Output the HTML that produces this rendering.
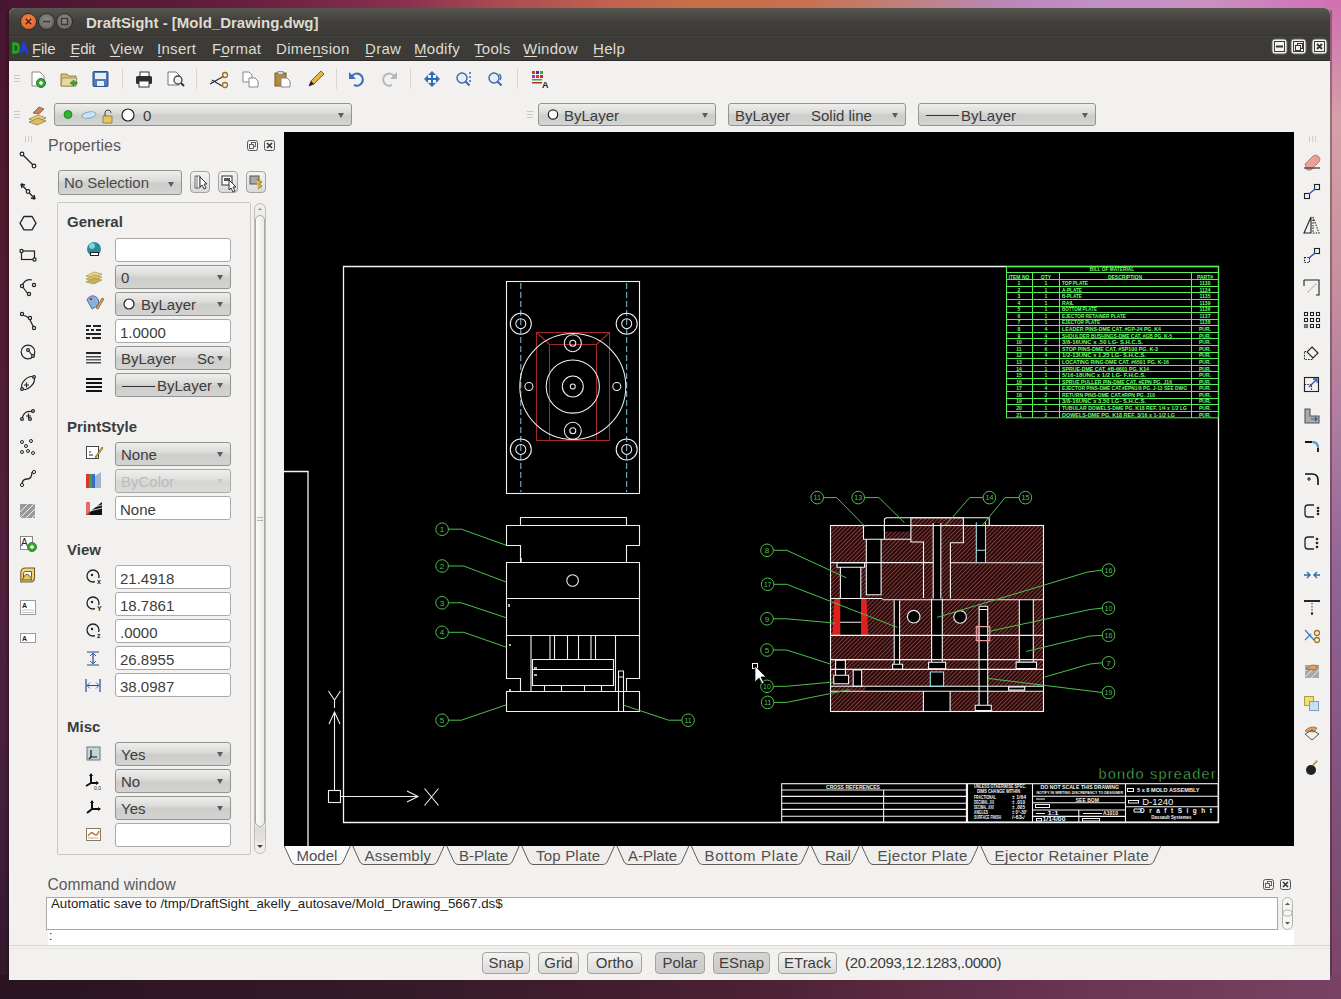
<!DOCTYPE html>
<html><head><meta charset="utf-8">
<style>
*{margin:0;padding:0;box-sizing:border-box}
html,body{width:1341px;height:999px;overflow:hidden}
body{position:relative;font-family:"Liberation Sans",sans-serif;font-size:14px;color:#3c3c3c;background:#3a1228}
.a{position:absolute}
#bg{left:0;top:0;width:1341px;height:999px;background:linear-gradient(90deg,#3c1229 0%,#4c1833 45%,#8a3a68 80%,#c864a0 100%)}
#bg2{left:0;top:0;width:1341px;height:999px;background:linear-gradient(180deg,rgba(0,0,0,0) 0%,rgba(0,0,0,0) 60%,rgba(20,10,20,0.35) 100%)}
#win{left:9px;top:8px;width:1321px;height:972px;background:#f2f1f0;border-radius:6px 6px 0 0}
#title{left:9px;top:8px;width:1321px;height:28px;background:linear-gradient(#57554f,#403f3a 50%,#3c3b37);border-radius:6px 6px 0 0}
#menu{left:9px;top:36px;width:1321px;height:25px;background:#3c3b37}
.ttl{color:#dfdbd2;font-weight:bold;font-size:15px;white-space:nowrap}
.mi{color:#dfdbd2;font-size:15px;white-space:nowrap;top:40px;letter-spacing:.3px}
.wb{width:17px;height:17px;border-radius:50%;top:13px}
.cb{border:1px solid #939392;border-radius:3px;background:linear-gradient(#eeeeed 0%,#dcdcdb 40%,#cdcdcc 55%,#d3d3d2 100%);white-space:nowrap;font-size:15px;color:#3c3c3c;overflow:hidden}
.cb .ar{position:absolute;right:7px;top:9px;width:0;height:0;border-left:3.5px solid transparent;border-right:3.5px solid transparent;border-top:5px solid #5c5c5c}
.tf{border:1px solid #aaa9a7;border-radius:3px;background:#fff;white-space:nowrap;font-size:15px;color:#3c3c3c;overflow:hidden}
.btn{border:1px solid #a4a3a1;border-radius:4px;background:linear-gradient(#f4f4f3,#dad9d7);font-size:15px;color:#3c3c3c;text-align:center;white-space:nowrap}
.btnp{background:linear-gradient(#d6d5d3,#cbcac8)}
.sec{font-weight:bold;font-size:15px;color:#3c3c3c}
.tab{font-size:15px;color:#505050;white-space:nowrap;top:847px}
</style></head><body>
<div class="a" style="left:0;top:0;width:1341px;height:999px;background:linear-gradient(180deg,#481530 0%,#4e1a2e 20%,#52203c 55%,#44203a 80%,#30182a 100%)"></div><div class="a" style="left:5px;top:8px;width:4px;height:972px;background:linear-gradient(90deg,rgba(20,10,15,0),rgba(20,10,15,.4))"></div>
<div class="a" style="left:0;top:0;width:1341px;height:10px;background:linear-gradient(90deg,#481530 0%,#5a1a38 12%,#6a2040 19%,#8a3050 30%,#a84a50 37%,#c06050 45%,#c87048 52%,#c87050 60%,#c08078 67%,#b888b8 75%,#c090c8 82%,#c890c0 90%,#d078b8 97%,#d070b0 100%)"></div>
<div class="a" style="left:1325px;top:0;width:16px;height:999px;background:linear-gradient(180deg,#d070b0 0%,#d8a0a8 12%,#c8909e 28%,#b07ca0 42%,#946494 57%,#84527c 78%,#7a4466 100%)"></div><div class="a" style="left:1330px;top:10px;width:2px;height:972px;background:rgba(40,20,30,.35)"></div>
<div class="a" style="left:0;top:975px;width:1341px;height:24px;background:linear-gradient(90deg,#2a1422 0%,#351a28 30%,#4a2032 55%,#6a3452 80%,#7a4262 100%)"></div>
<div class="a" id="win"></div>
<div class="a" id="title"></div>
<div class="a" id="menu"></div><div class="a" style="left:9px;top:34.5px;width:1321px;height:1px;background:#34332f"></div><div class="a" style="left:9px;top:36px;width:1321px;height:1px;background:#44433e"></div><div class="a" style="left:9px;top:60px;width:1321px;height:1px;background:#2e2d2a"></div>
<!-- window buttons -->
<div class="a wb" style="left:20px;background:radial-gradient(circle at 50% 40%,#f7834c,#e05a1e);border:1px solid #2c2b28"></div>
<div class="a wb" style="left:38px;background:radial-gradient(circle at 50% 40%,#8e8c86,#5f5d58);border:1px solid #2c2b28"></div>
<div class="a wb" style="left:56px;background:radial-gradient(circle at 50% 40%,#8e8c86,#5f5d58);border:1px solid #2c2b28"></div>
<div class="a ttl" style="left:86px;top:14px">DraftSight - [Mold_Drawing.dwg]</div>
<!-- menu -->
<svg class="a" style="left:9px;top:8px" width="1321" height="53" viewBox="9 8 1321 53">
 <path d="M25.8 18.8l5.4 5.4M31.2 18.8l-5.4 5.4" stroke="#4a2214" stroke-width="1.5"/>
 <path d="M43 21.5h7" stroke="#3a3a36" stroke-width="1.6"/>
 <rect x="61.5" y="18.5" width="6" height="6" fill="none" stroke="#3a3a36" stroke-width="1.3"/>
 <path d="M12 42h3q5 0 5 6t-5 6h-3z" fill="#2aa82a" stroke="#1a6a1a" stroke-width=".8"/><path d="M14.5 45h1q2 0 2 3t-2 3h-1z" fill="#1a5a1a"/>
 <path d="M19 54l4-12h2l4 12h-2.5l-1-3h-3l-1 3z" fill="#2a3ad8"/>
 <g fill="#dfdbd2"><rect x="32.4" y="56" width="7.2" height="1"/><rect x="70" y="56" width="8.8" height="1"/><rect x="109.9" y="56" width="10.3" height="1"/><rect x="158.3" y="56" width="3.2" height="1"/><rect x="220.3" y="56" width="8.1" height="1"/><rect x="313.3" y="56" width="9" height="1"/><rect x="365.4" y="56" width="7.9" height="1"/><rect x="415.3" y="56" width="11.9" height="1"/><rect x="475.4" y="56" width="8.5" height="1"/><rect x="524.1" y="56" width="13" height="1"/><rect x="593.8" y="56" width="9.6" height="1"/></g>
 <g fill="#f2f1f0" stroke="#6a6964" stroke-width="1"><rect x="1272" y="39" width="15" height="15" rx="3"/><rect x="1291" y="39" width="15" height="15" rx="3"/><rect x="1312" y="39" width="15" height="15" rx="3"/></g>
 <g fill="none" stroke="#3a3a36" stroke-width="1"><rect x="1274.5" y="41.5" width="10" height="10"/><rect x="1293.5" y="41.5" width="10" height="10"/><rect x="1314.5" y="41.5" width="10" height="10"/></g>
 <path d="M1276 46.5h7" stroke="#333" stroke-width="2"/>
 <rect x="1297.5" y="43.5" width="5" height="5" fill="none" stroke="#333"/><rect x="1295.5" y="45.5" width="5" height="5" fill="#f2f1f0" stroke="#333"/>
 <path d="M1317 44l5 5M1322 44l-5 5" stroke="#333" stroke-width="1.8"/>
</svg>
<div class="a mi" style="left:32px;letter-spacing:-.2px">File</div>
<div class="a mi" style="left:70.5px;letter-spacing:-.3px">Edit</div>
<div class="a mi" style="left:110px">View</div>
<div class="a mi" style="left:157px">Insert</div>
<div class="a mi" style="left:212px">Format</div>
<div class="a mi" style="left:276px">Dimension</div>
<div class="a mi" style="left:365px">Draw</div>
<div class="a mi" style="left:414px">Modify</div>
<div class="a mi" style="left:474px">Tools</div>
<div class="a mi" style="left:523px">Window</div>
<div class="a mi" style="left:593px">Help</div>

<!-- toolbar 1 -->
<svg class="a" style="left:9px;top:61px" width="1321" height="72" viewBox="9 61 1321 72">
 <g fill="#c9c8c5"><rect x="14" y="75" width="6" height="1"/><rect x="14" y="78" width="6" height="1"/><rect x="14" y="81" width="6" height="1"/>
 <rect x="14" y="111" width="6" height="1"/><rect x="14" y="114" width="6" height="1"/><rect x="14" y="117" width="6" height="1"/>
 <rect x="527" y="111" width="6" height="1"/><rect x="527" y="114" width="6" height="1"/><rect x="527" y="117" width="6" height="1"/></g>
 <g fill="#d6d5d2"><rect x="122" y="69" width="1" height="20"/><rect x="196" y="69" width="1" height="20"/><rect x="336" y="69" width="1" height="20"/><rect x="410" y="69" width="1" height="20"/><rect x="517" y="69" width="1" height="20"/></g>
 <!-- new -->
 <path d="M32 72h8l4 4v10h-12z" fill="#fff" stroke="#8a8a8a" stroke-width="1"/>
 <circle cx="41" cy="83" r="4.5" fill="#3aa53a" stroke="#1e7a1e"/><path d="M39 83h4M41 81v4" stroke="#fff" stroke-width="1.5"/>
 <!-- open -->
 <path d="M61 74h6l2 2h7v10h-15z" fill="#d8c07a" stroke="#9a8446"/><path d="M62 78h15l-2 8h-14z" fill="#e8d9a0" stroke="#9a8446" stroke-width=".8"/>
 <path d="M70 83l4-3v2h3v2h-3v2z" fill="#3aa53a" stroke="#1e7a1e" stroke-width=".6"/>
 <!-- save -->
 <rect x="93" y="71.5" width="15" height="15" rx="1" fill="#4f7ab8" stroke="#2b4f86"/><rect x="95" y="73" width="11" height="6" fill="#e8eef6"/><rect x="97" y="81" width="7" height="5" fill="#e8eef6"/>
 <!-- print -->
 <rect x="140" y="72" width="9" height="5" fill="#fff" stroke="#333"/><rect x="136" y="76" width="16" height="8" rx="1.5" fill="#2e2e2e"/><rect x="139" y="81" width="10" height="6" fill="#fff" stroke="#333"/>
 <!-- preview -->
 <path d="M168 72h8l3 3v10h-11z" fill="#fff" stroke="#777"/><circle cx="178" cy="80" r="4" fill="#f3f3f3" stroke="#444" stroke-width="1.3"/><path d="M181 83l3 3" stroke="#333" stroke-width="2"/>
 <!-- cut -->
 <path d="M210 84l14-8M212 80l10 6" stroke="#333" stroke-width="1.3"/><circle cx="225" cy="75" r="2.5" fill="none" stroke="#a07020" stroke-width="1.3"/><circle cx="225" cy="85" r="2.5" fill="none" stroke="#a07020" stroke-width="1.3"/>
 <path d="M211 82h4" stroke="#555" stroke-dasharray="1 1"/>
 <!-- copy -->
 <path d="M243 72h6l3 3v7h-9z" fill="#fff" stroke="#888"/><path d="M249 78h6l3 3v6h-9z" fill="#fff" stroke="#888"/>
 <!-- paste -->
 <rect x="275" y="73" width="11" height="13" fill="#b88a3c" stroke="#7a5a20"/><rect x="278" y="71.5" width="5" height="3" fill="#ddd" stroke="#666" stroke-width=".6"/><path d="M281 78h6l3 3v6h-9z" fill="#fff" stroke="#888"/>
 <!-- pencil -->
 <path d="M309 86l2-5 10-10 3 3-10 10z" fill="#e2b64a" stroke="#5a4a2a" stroke-width=".8"/><path d="M309 86l2-5 3 3z" fill="#222"/>
 <!-- undo -->
 <path d="M352 76a6 6 0 1 1 2 9" fill="none" stroke="#3b6fb6" stroke-width="2.2"/><path d="M349 72v7h7z" fill="#3b6fb6"/>
 <!-- redo -->
 <path d="M394 76a6 6 0 1 0 -2 9" fill="none" stroke="#b8b8b8" stroke-width="2.2"/><path d="M397 72v7h-7z" fill="#b8b8b8"/>
 <!-- pan -->
 <path d="M432 71l4 4h-3v3h3v-3l4 4-4 4v-3h-3v3h3l-4 4-4-4h3v-3h-3v3l-4-4 4-4v3h3v-3h-3z" fill="#2f6db5"/>
 <!-- zoom -->
 <circle cx="462" cy="78" r="5" fill="#e6eef8" stroke="#3a6aa8" stroke-width="1.4"/><path d="M465.5 81.5l4 4" stroke="#3a6aa8" stroke-width="2"/><circle cx="470" cy="73" r="1" fill="#3a6aa8"/><circle cx="470" cy="77" r="1" fill="#3a6aa8"/><circle cx="470" cy="81" r="1" fill="#3a6aa8"/>
 <!-- zoom prev -->
 <circle cx="494" cy="78" r="5" fill="#e6eef8" stroke="#3a6aa8" stroke-width="1.4"/><path d="M497.5 81.5l4 4" stroke="#3a6aa8" stroke-width="2"/><path d="M499 74a4 4 0 0 1 1 6" fill="none" stroke="#3a6aa8" stroke-width="1.3"/>
 <!-- layer manager -->
 <rect x="532" y="71" width="3" height="3" fill="#d33"/><rect x="536" y="71" width="3" height="3" fill="#33a"/><rect x="540" y="71" width="3" height="3" fill="#3a3"/>
 <rect x="532" y="75" width="3" height="3" fill="#a3a"/><rect x="536" y="75" width="3" height="3" fill="#d33"/><rect x="540" y="75" width="3" height="3" fill="#a33"/>
 <rect x="532" y="79" width="10" height="1.5" fill="#3a3"/><rect x="532" y="82" width="10" height="1.5" fill="#a33"/><text x="542" y="88" font-size="9" font-weight="bold" fill="#222" font-family="Liberation Sans">A</text>
 <!-- layer icon row2 -->
 <path d="M29 119l9-4 8 3-9 4z" fill="#e8d28a" stroke="#8a7432" stroke-width=".7"/><path d="M29 122l9-4 8 3-9 4z" fill="#d8bc66" stroke="#8a7432" stroke-width=".7"/><path d="M33 113l6-6 5 2-5 5z" fill="#c8845a" stroke="#7a4a2a" stroke-width=".7"/>
</svg>
<div class="a cb" style="left:54px;top:103px;width:298px;height:23px">
 <svg class="a" style="left:0;top:0" width="120" height="22"><circle cx="13" cy="10.5" r="4" fill="#2fb52f" stroke="#1a7a1a" stroke-width=".8"/><ellipse cx="34" cy="11" rx="7" ry="3" fill="#cfe2f2" stroke="#7aa6cc" transform="rotate(-12 34 11)"/><path d="M48 12h9v7h-9z" fill="#e4c85a" stroke="#8a7432" stroke-width=".8"/><path d="M50 12v-3a3 3 0 0 1 6 0" fill="none" stroke="#444" stroke-width="1"/><circle cx="73" cy="11" r="6" fill="#fff" stroke="#222" stroke-width="1.2"/></svg>
 <div class="a" style="left:88px;top:3px">0</div><div class="ar"></div></div>
<div class="a cb" style="left:538px;top:103px;width:178px;height:23px"><svg class="a" style="left:0;top:0" width="30" height="22"><circle cx="14" cy="10.5" r="4.7" fill="#fff" stroke="#222" stroke-width="1.2"/></svg><div class="a" style="left:25px;top:3px">ByLayer</div><div class="ar"></div></div>
<div class="a cb" style="left:728px;top:103px;width:178px;height:23px"><div class="a" style="left:6px;top:3px">ByLayer</div><div class="a" style="left:82px;top:3px">Solid line</div><div class="ar"></div></div>
<div class="a cb" style="left:918px;top:103px;width:178px;height:23px"><div class="a" style="left:7px;top:11px;width:33px;height:1px;background:#333"></div><div class="a" style="left:42px;top:3px">ByLayer</div><div class="ar"></div></div>


<!-- left toolbar -->
<svg class="a" style="left:9px;top:132px" width="36" height="520" viewBox="9 132 36 520">
 <g fill="#d0cfcc"><rect x="25" y="136" width="1" height="6"/><rect x="28" y="136" width="1" height="6"/><rect x="31" y="136" width="1" height="6"/></g>
 <g fill="none" stroke="#222" stroke-width="1.2">
  <path d="M22 154L34 166"/><circle cx="22" cy="154" r="1.8" fill="#f2f1f0"/><circle cx="34" cy="166" r="1.8" fill="#f2f1f0"/>
  <path d="M21 184L35 199"/><circle cx="28" cy="191.5" r="1.8" fill="#f2f1f0"/><path d="M21 184l4 1M21 184l1 4M35 199l-4-1M35 199l-1-4" stroke-width="1.4"/>
  <path d="M24 216.5h8l4 6.7-4 6.7h-8l-4-6.7z" stroke-width="1.3"/>
  <rect x="21.5" y="251" width="13" height="8.5"/><circle cx="21.5" cy="251" r="1.6" fill="#f2f1f0"/><circle cx="34.5" cy="259.5" r="1.6" fill="#f2f1f0"/>
  <path d="M22 286q3-8 10-6M22 286l6 8" /><circle cx="22" cy="286" r="1.6" fill="#f2f1f0"/><circle cx="29" cy="294" r="1.6" fill="#f2f1f0"/><circle cx="34" cy="285" r="1.6" fill="#f2f1f0"/>
  <path d="M22 315q6 1 8 5t4 8"/><circle cx="22" cy="314" r="1.6" fill="#f2f1f0"/><circle cx="30" cy="318" r="1.6" fill="#f2f1f0"/><circle cx="34" cy="328" r="1.6" fill="#f2f1f0"/>
  <circle cx="28" cy="352" r="6.8"/><path d="M28 350l4 5"/><circle cx="28" cy="350" r="1.4" fill="#f2f1f0"/><circle cx="33" cy="356" r="1.4" fill="#f2f1f0"/>
  <ellipse cx="28" cy="383" rx="8" ry="4.5" transform="rotate(-45 28 383)"/><circle cx="22" cy="389" r="1.4" fill="#f2f1f0"/><circle cx="34" cy="377" r="1.4" fill="#f2f1f0"/><path d="M24 385h5M26.5 382.5v5"/>
  <path d="M22 419q2-10 12-7"/><circle cx="22" cy="419" r="1.4" fill="#f2f1f0"/><circle cx="30" cy="419" r="1.4" fill="#f2f1f0"/><circle cx="33" cy="411" r="1.4" fill="#f2f1f0"/><path d="M26 416h5M28.5 413.5v5"/>
 </g>
 <g fill="none" stroke="#222" stroke-width="1"><circle cx="22" cy="442" r="1.5"/><circle cx="31" cy="441" r="1.5"/><circle cx="26" cy="446" r="1.5"/><circle cx="22" cy="452" r="1.5"/><circle cx="28" cy="451" r="1.5"/><circle cx="33" cy="453" r="1.5"/></g>
 <path d="M22 485q0-6 5-6t5-7" fill="none" stroke="#222" stroke-width="1.3"/><circle cx="22" cy="485" r="1.6" fill="#f2f1f0" stroke="#222"/><circle cx="34" cy="472" r="1.6" fill="#f2f1f0" stroke="#222"/>
 <rect x="20" y="504" width="15" height="14" fill="#9a9a9a"/><path d="M20 512l8-8M20 518l14-14M26 518l9-9M32 518l3-3" stroke="#eee" stroke-width="1"/>
 <rect x="20.5" y="536.5" width="12" height="13" fill="#fff" stroke="#888"/><text x="21" y="546" font-size="10" fill="#222" font-family="Liberation Sans">A</text><circle cx="32" cy="547" r="4.5" fill="#36a836" stroke="#1a6a1a" stroke-width=".8"/><path d="M30 547h4M32 545v4" stroke="#fff" stroke-width="1.3"/>
 <path d="M20.8 573q0-5 5-5h8.7v9.5q0 4.5-4 4.5h-9.7z" fill="#f0d878" stroke="#6a5a2a" stroke-width="1.1"/><path d="M23.5 580v-6.5q0-2 2-2h6v6" fill="#fff" stroke="#6a5a2a" stroke-width="1"/><path d="M22 580q3-6 5-6t5 6z" fill="#e8c858" stroke="#5a4a1a" stroke-width=".9"/>
 <rect x="20.5" y="600.5" width="15" height="14" fill="#fff" stroke="#999"/><text x="22" y="608" font-size="7" font-weight="bold" fill="#222" font-family="Liberation Sans">A</text><path d="M22 610h12M22 612.5h12" stroke="#aaa" stroke-width=".7"/>
 <rect x="20.5" y="633.5" width="15" height="9" fill="#fff" stroke="#999"/><text x="22" y="641" font-size="7" font-weight="bold" fill="#222" font-family="Liberation Sans">A</text>
</svg>
<!-- properties -->
<div class="a" style="left:48px;top:136.5px;font-size:16px;color:#5a5a5a">Properties</div>
<svg class="a" style="left:245px;top:138px" width="32" height="16"><rect x="2.5" y="2.5" width="10" height="10" rx="2" fill="none" stroke="#555"/><rect x="6.5" y="4.5" width="4" height="4" fill="none" stroke="#555" stroke-width=".9"/><rect x="4.5" y="6.5" width="4" height="4" fill="#f2f1f0" stroke="#555" stroke-width=".9"/><rect x="19.5" y="2.5" width="10" height="10" rx="2" fill="none" stroke="#555"/><path d="M22 5l5 5M27 5l-5 5" stroke="#333" stroke-width="1.6"/></svg>
<div class="a cb" style="left:58px;top:170px;width:124px;height:25px"><div class="a" style="left:5px;top:3px;color:#4a4a4a">No Selection</div><div class="ar" style="top:11px"></div></div>
<div class="a btn" style="left:190px;top:171px;width:20px;height:22px"></div>
<div class="a btn" style="left:218px;top:171px;width:20px;height:22px"></div>
<div class="a btn" style="left:246px;top:171px;width:20px;height:22px"></div>
<svg class="a" style="left:190px;top:171px" width="80" height="22">
 <path d="M5 5h5v12h-5zM7 5v12" fill="#fff" stroke="#444" stroke-width=".8"/><path d="M10 6l7 7h-3l2 4-2 1-2-4-2 2z" fill="#fff" stroke="#222" stroke-width=".9"/>
 <rect x="32" y="5" width="10" height="9" fill="#fff" stroke="#333"/><rect x="34" y="7" width="6" height="3" fill="#555"/><path d="M39 9l7 7h-3l2 4-2 1-2-4-2 2z" fill="#fff" stroke="#222" stroke-width=".9"/>
 <rect x="60" y="5" width="9" height="8" fill="#aaa" stroke="#555"/><path d="M66 8l6 3-3 2 3 2-4 3" fill="#e2b83a" stroke="#8a6a1a" stroke-width=".8"/>
</svg>
<div class="a" style="left:57px;top:202px;width:194px;height:653px;border:1px solid #c9c8c5;border-radius:2px"></div>
<div class="a" style="left:254px;top:203px;width:12px;height:651px;border:1px solid #bebdba;border-radius:6px;background:#efeeed"></div>
<div class="a" style="left:255px;top:827px;width:10px;height:16px;background:linear-gradient(#dcdbd9,#e4e3e1);border-radius:0 0 5px 5px"></div><div class="a" style="left:255px;top:215px;width:10px;height:612px;border:1px solid #a9a8a5;border-radius:5px;background:linear-gradient(90deg,#fbfbfb,#ebeae8)"></div><div class="a" style="left:257px;top:845px;width:0;height:0;border-left:3px solid transparent;border-right:3px solid transparent;border-top:3px solid #444"></div><div class="a" style="left:257.5px;top:208px;width:0;height:0;border-left:2.5px solid transparent;border-right:2.5px solid transparent;border-bottom:2px solid #888"></div>
<div class="a" style="left:257px;top:517px;width:6px;height:1px;background:#b5b4b1"></div><div class="a" style="left:257px;top:520px;width:6px;height:1px;background:#b5b4b1"></div>
<div class="a sec" style="left:67px;top:213px">General</div>
<div class="a sec" style="left:67px;top:418px">PrintStyle</div>
<div class="a sec" style="left:67px;top:541px">View</div>
<div class="a sec" style="left:67px;top:718px">Misc</div>
<div class="a tf" style="left:115px;top:238px;width:116px;height:24px"></div>
<div class="a cb" style="left:115px;top:265px;width:116px;height:24px"><div class="a" style="left:5px;top:3px">0</div><div class="ar"></div></div>
<div class="a cb" style="left:115px;top:292px;width:116px;height:24px"><svg class="a" style="left:0;top:0" width="24" height="22"><circle cx="13" cy="11" r="5" fill="#fff" stroke="#222" stroke-width="1.2"/></svg><div class="a" style="left:25px;top:3px">ByLayer</div><div class="ar"></div></div>
<div class="a tf" style="left:115px;top:319px;width:116px;height:24px"><div class="a" style="left:4px;top:4px">1.0000</div></div>
<div class="a cb" style="left:115px;top:346px;width:116px;height:24px"><div class="a" style="left:5px;top:3px">ByLayer</div><div class="a" style="left:81px;top:3px">Sc</div><div class="ar"></div></div>
<div class="a cb" style="left:115px;top:373px;width:116px;height:24px"><div class="a" style="left:6px;top:12px;width:33px;height:1px;background:#333"></div><div class="a" style="left:41px;top:3px">ByLayer</div><div class="ar"></div></div>
<div class="a cb" style="left:115px;top:442px;width:116px;height:24px"><div class="a" style="left:5px;top:3px">None</div><div class="ar"></div></div>
<div class="a cb" style="left:115px;top:469px;width:116px;height:24px;opacity:.75;color:#aaa"><div class="a" style="left:5px;top:3px;color:#aaa">ByColor</div><div class="ar" style="border-top-color:#bbb"></div></div>
<div class="a tf" style="left:115px;top:496px;width:116px;height:24px"><div class="a" style="left:4px;top:4px">None</div></div>
<div class="a tf" style="left:115px;top:565px;width:116px;height:24px"><div class="a" style="left:4px;top:4px">21.4918</div></div>
<div class="a tf" style="left:115px;top:592px;width:116px;height:24px"><div class="a" style="left:4px;top:4px">18.7861</div></div>
<div class="a tf" style="left:115px;top:619px;width:116px;height:24px"><div class="a" style="left:4px;top:4px">.0000</div></div>
<div class="a tf" style="left:115px;top:646px;width:116px;height:24px"><div class="a" style="left:4px;top:4px">26.8955</div></div>
<div class="a tf" style="left:115px;top:673px;width:116px;height:24px"><div class="a" style="left:4px;top:4px">38.0987</div></div>
<div class="a cb" style="left:115px;top:742px;width:116px;height:24px"><div class="a" style="left:5px;top:3px">Yes</div><div class="ar"></div></div>
<div class="a cb" style="left:115px;top:769px;width:116px;height:24px"><div class="a" style="left:5px;top:3px">No</div><div class="ar"></div></div>
<div class="a cb" style="left:115px;top:796px;width:116px;height:24px"><div class="a" style="left:5px;top:3px">Yes</div><div class="ar"></div></div>
<div class="a tf" style="left:115px;top:823px;width:116px;height:24px"></div>
<svg class="a" style="left:82px;top:236px" width="26" height="616" viewBox="82 236 26 616">
 <circle cx="94" cy="249" r="7" fill="#2a8a9a"/><circle cx="92" cy="246" r="3" fill="#7fd0d8"/><rect x="90" y="252" width="9" height="4" fill="#222"/><rect x="91" y="253" width="7" height="2" fill="#fff"/>
 <path d="M86 276l8-4 8 2-8 4z" fill="#e8d890" stroke="#9a8a3a" stroke-width=".6"/><path d="M86 279l8-4 8 2-8 4z" fill="#d8c470" stroke="#9a8a3a" stroke-width=".6"/><path d="M86 282l8-4 8 2-8 4z" fill="#c8b050" stroke="#9a8a3a" stroke-width=".6"/>
 <path d="M87 300a6 6 0 1 1 10 6l-5 3z" fill="#8ab0e0" stroke="#3a5a9a" stroke-width=".8"/><path d="M96 308l6-10 2 1-6 10z" fill="#e0a040" stroke="#6a4a1a" stroke-width=".6"/><circle cx="91" cy="299" r="1.3" fill="#c33"/>
 <g fill="#222"><rect x="86" y="325" width="5" height="2"/><rect x="93" y="325" width="8" height="2"/><rect x="86" y="329" width="3" height="2"/><rect x="91" y="329" width="3" height="2"/><rect x="96" y="329" width="5" height="2"/><rect x="86" y="333" width="15" height="2"/><rect x="86" y="337" width="4" height="2"/><rect x="92" y="337" width="9" height="2"/></g>
 <g fill="#222"><rect x="86" y="352" width="15" height="2"/><rect x="86" y="356" width="15" height="1.5" opacity=".8"/><rect x="86" y="359" width="15" height="1.5" opacity=".7"/><rect x="86" y="362" width="15" height="1.5" opacity=".8"/></g>
 <g fill="#111"><rect x="86" y="378" width="16" height="2"/><rect x="86" y="382" width="16" height="2"/><rect x="86" y="386" width="16" height="2"/><rect x="86" y="390" width="16" height="2"/></g>
 <rect x="86.5" y="446.5" width="12" height="12" fill="#fff" stroke="#444"/><path d="M89 452h2M89 455h4" stroke="#222"/><path d="M95 457l7-10 1 1-7 10z" fill="#e0b040" stroke="#5a4a1a" stroke-width=".6"/>
 <rect x="86" y="474" width="3" height="14" fill="#d33"/><rect x="89" y="474" width="3" height="14" fill="#3a3"/><rect x="92" y="474" width="3" height="14" fill="#3a6ad0"/><path d="M95 476l6-4v16h-6z" fill="#8ac" opacity=".8"/>
 <path d="M86 515l16-13v13z" fill="#111"/><rect x="86" y="502" width="4" height="13" fill="#d33" opacity=".7"/><path d="M90 508l12-3M90 511l12-3" stroke="#fff" stroke-width=".8"/>
 <g fill="none" stroke="#222" stroke-width="1.3"><circle cx="93" cy="576" r="6"/><circle cx="93" cy="603" r="6"/><circle cx="93" cy="630" r="6"/></g>
 <g fill="#f2f1f0"><rect x="95" y="578" width="8" height="7"/><rect x="95" y="605" width="8" height="7"/><rect x="95" y="632" width="8" height="7"/></g>
 <g fill="#222" font-size="7" font-weight="bold" font-family="Liberation Sans"><text x="97" y="584">x</text><text x="97" y="611">Y</text><text x="97" y="638">z</text></g>
 <circle cx="92" cy="575" r="1.2" fill="#222"/><circle cx="92" cy="602" r="1.2" fill="#222"/><circle cx="92" cy="629" r="1.2" fill="#222"/>
 <path d="M87 652h12M87 665h12M93 653v11" stroke="#2a4a8a" stroke-width="1.2"/><path d="M90 656l3-3 3 3M90 661l3 3 3-3" fill="none" stroke="#2a6ad0" stroke-width="1"/>
 <path d="M86 679v13M100 679v13M87 685.5h12" stroke="#2a4a8a" stroke-width="1.2"/><path d="M90 682.5l-3 3 3 3M96 682.5l3 3-3 3" fill="none" stroke="#2a6ad0" stroke-width="1"/>
 <rect x="87" y="747" width="13" height="13" fill="#c4d4d8" stroke="#6a7a7a"/><path d="M91 750v7h6M91 757l-2 2" stroke="#111" stroke-width="1.2" fill="none"/>
 <path d="M91 774v9l-5 3M91 783h7" stroke="#111" stroke-width="2" fill="none"/><path d="M89 776l2-3 2 3M96 781l3 2-3 2" fill="#111"/><text x="94" y="790" font-size="5" fill="#222" font-family="Liberation Sans">0,0</text>
 <path d="M92 801v8l-5 4M92 809h8" stroke="#111" stroke-width="2" fill="none"/><path d="M90 803l2-3 2 3M98 807l3 2-3 2" fill="#111"/>
 <rect x="86.5" y="828.5" width="14" height="12" fill="#fff" stroke="#8a7a5a"/><path d="M88 836q3-5 6-2t5-3" stroke="#c07a3a" stroke-width="1.5" fill="none"/><path d="M88 838h10" stroke="#aaa"/>
</svg>


<!-- right toolbar -->
<svg class="a" style="left:1294px;top:132px" width="36" height="660" viewBox="1294 132 36 660">
 <g fill="#d0cfcc"><rect x="1309" y="136" width="1" height="6"/><rect x="1312" y="136" width="1" height="6"/><rect x="1315" y="136" width="1" height="6"/></g>
 <path d="M1305 164l8-8q3-2 5 0l1 1q2 2 0 5l-8 8h-4z" fill="#e8a098" stroke="#b86a62" stroke-width=".8"/><path d="M1304 168h16" stroke="#333" stroke-width="1.2"/>
 <g fill="none" stroke="#222" stroke-width="1.1">
  <rect x="1304.5" y="193.5" width="5" height="5"/><rect x="1314.5" y="184.5" width="5" height="5"/><path d="M1309 194l6-5" stroke="#2a5ab0" stroke-width="1.5"/>
  <path d="M1311 217v16h-7z" /><path d="M1313 217l6 16h-6z" stroke-dasharray="1.5 1.2"/>
  <rect x="1304.5" y="257.5" width="5" height="5" stroke-dasharray="1.5 1.2"/><rect x="1314.5" y="248.5" width="5" height="5"/><path d="M1309 258l6-5" stroke="#2a5ab0" stroke-width="1.5"/>
  <path d="M1304 280h15v15h-3M1304 280v6" /><path d="M1308 292l8-8" stroke="#999" stroke-dasharray="1.5 1"/>
 </g>
 <g fill="#fff" stroke="#222" stroke-width="1.1"><rect x="1304.5" y="312.5" width="3" height="3"/><rect x="1310.5" y="312.5" width="3" height="3"/><rect x="1316.5" y="312.5" width="3" height="3"/><rect x="1304.5" y="318.5" width="3" height="3"/><rect x="1310.5" y="318.5" width="3" height="3"/><rect x="1316.5" y="318.5" width="3" height="3"/><rect x="1304.5" y="324.5" width="3" height="3" fill="#888" stroke="#666"/><rect x="1310.5" y="324.5" width="3" height="3"/><rect x="1316.5" y="324.5" width="3" height="3"/></g>
 <g fill="none" stroke="#222" stroke-width="1.1">
  <rect x="1304.5" y="351.5" width="8" height="8" stroke-dasharray="1.5 1.2"/><path d="M1312 347l6 6-5 5-6-6z" fill="#f2f1f0"/>
  <rect x="1304.5" y="377.5" width="14" height="14"/><rect x="1304.5" y="384.5" width="7" height="7" stroke-dasharray="1.5 1.2"/><path d="M1309 387l8-8M1313 379h4v4" stroke="#2a5ab0" stroke-width="1.3"/>
  <path d="M1305 409h5v7h9v7h-14z" fill="#aaa" stroke="#555"/><path d="M1311 419h6M1315 417l2 2-2 2" stroke="#2a5ab0"/>
  <path d="M1305 442h7q6 0 6 6v4" stroke="#111" stroke-width="1.8"/><path d="M1312 442q6 0 6 6" stroke="#5ab0e0" stroke-width="1.8"/>
  <path d="M1305 474h7q6 0 6 6v5" stroke="#111" stroke-width="1.6"/><path d="M1307 479h4M1309 477v4"/>
  <path d="M1314 505h-6q-3 0-3 3v6q0 3 3 3h6" stroke-width="1.3"/><circle cx="1318" cy="508" r=".8" fill="#222"/><circle cx="1318" cy="511" r=".8" fill="#222"/><circle cx="1318" cy="514" r=".8" fill="#222"/>
  <path d="M1314 537h-6q-3 0-3 3v6q0 3 3 3h6" stroke-width="1.3"/><circle cx="1317" cy="539" r=".8" fill="#222"/><circle cx="1317" cy="543" r=".8" fill="#222"/><circle cx="1317" cy="547" r=".8" fill="#222"/>
 </g>
 <path d="M1304 575h6M1314 575h6M1307 572l3 3-3 3M1317 572l-3 3 3 3" fill="none" stroke="#2a6ab0" stroke-width="1.3"/>
 <path d="M1304 601h16" stroke="#111" stroke-width="1.8"/><path d="M1312 603v9" stroke="#555" stroke-width="1.2" stroke-dasharray="1.5 1.5"/><path d="M1312 612v3" stroke="#111" stroke-width="1.6"/>
 <path d="M1305 630l9 10M1305 640l6-6" stroke="#3a7ac0" stroke-width="1.2"/><circle cx="1317" cy="633" r="2.5" fill="none" stroke="#a07a20" stroke-width="1.3"/><circle cx="1317" cy="640" r="2.5" fill="none" stroke="#a07a20" stroke-width="1.3"/>
 <rect x="1305" y="665" width="14" height="13" fill="#aaa"/><path d="M1305 671l6-6M1305 677l12-12M1311 678l8-8" stroke="#eee" stroke-width=".8"/><path d="M1306 669q5-6 12-3l-3 4z" fill="#e0a060" stroke="#8a5a2a" stroke-width=".7"/>
 <rect x="1304.5" y="696.5" width="9" height="9" fill="#f0e070" stroke="#b0a040"/><rect x="1309.5" y="701.5" width="9" height="9" fill="#c8e0f0" stroke="#6a9ac0" opacity=".9"/>
 <path d="M1305 731q5-6 12-3l-3 4z" fill="#e0a060" stroke="#8a5a2a" stroke-width=".7"/><path d="M1305 734l7 6 7-6-7-4z" fill="none" stroke="#555"/>
 <circle cx="1311" cy="770" r="5" fill="#222"/><path d="M1313 765l3-3" stroke="#a07020" stroke-width="1.2"/><circle cx="1316.5" cy="761.5" r="1.2" fill="#e0a030"/>
</svg>
<!-- tabs -->
<svg class="a" style="left:284px;top:846px" width="900" height="22" viewBox="284 846 900 22">
 <g stroke="#5e5d5a" stroke-width="1">
  <path d="M284 845.5L291.5 862Q293 864.5 295.5 864.5H339.0Q341.5 864.5 343.0 862L350.5 845.5" fill="#fbfbfb"/>
  <path d="M352.5 845.5L360.0 862Q361.5 864.5 364.0 864.5H432.9Q435.4 864.5 436.9 862L444.4 845.5" fill="#efeeed"/>
  <path d="M446.5 845.5L454.0 862Q455.5 864.5 458.0 864.5H508.0Q510.5 864.5 512.0 862L519.5 845.5" fill="#efeeed"/>
  <path d="M521.5 845.5L529.0 862Q530.5 864.5 533.0 864.5H603.2Q605.7 864.5 607.2 862L614.7 845.5" fill="#efeeed"/>
  <path d="M616.7 845.5L624.2 862Q625.7 864.5 628.2 864.5H677.6Q680.1 864.5 681.6 862L689.1 845.5" fill="#efeeed"/>
  <path d="M691.1 845.5L698.6 862Q700.1 864.5 702.6 864.5H797.7Q800.2 864.5 801.7 862L809.2 845.5" fill="#efeeed"/>
  <path d="M811.2 845.5L818.7 862Q820.2 864.5 822.7 864.5H848.0Q850.5 864.5 852.0 862L859.5 845.5" fill="#efeeed"/>
  <path d="M861.5 845.5L869.0 862Q870.5 864.5 873.0 864.5H967.0Q969.5 864.5 971.0 862L978.5 845.5" fill="#efeeed"/>
  <path d="M980.5 845.5L988.0 862Q989.5 864.5 992.0 864.5H1149.5Q1152 864.5 1153.5 862L1161 845.5" fill="#efeeed"/>
 </g>
</svg>
<div class="a tab" style="left:296.5px">Model</div>
<div class="a tab" style="left:364.5px;letter-spacing:.2px">Assembly</div>
<div class="a tab" style="left:459px">B-Plate</div>
<div class="a tab" style="left:536px;letter-spacing:.2px">Top Plate</div>
<div class="a tab" style="left:628px">A-Plate</div>
<div class="a tab" style="left:704.5px;letter-spacing:.7px">Bottom Plate</div>
<div class="a tab" style="left:825px">Rail</div>
<div class="a tab" style="left:877.5px;letter-spacing:.4px">Ejector Plate</div>
<div class="a tab" style="left:994.5px;letter-spacing:.4px">Ejector Retainer Plate</div>
<!-- command window -->
<div class="a" style="left:47.5px;top:875.6px;font-size:15.6px;color:#5a5a5a">Command window</div>
<svg class="a" style="left:1260px;top:877px" width="36" height="16"><rect x="3.5" y="2.5" width="10" height="10" rx="2" fill="none" stroke="#555"/><rect x="7.5" y="4.5" width="4" height="4" fill="none" stroke="#555" stroke-width=".9"/><rect x="5.5" y="6.5" width="4" height="4" fill="#f2f1f0" stroke="#555" stroke-width=".9"/><rect x="20.5" y="2.5" width="10" height="10" rx="2" fill="none" stroke="#555"/><path d="M23 5l5 5M28 5l-5 5" stroke="#333" stroke-width="1.6"/></svg>
<div class="a" style="left:46px;top:897px;width:1232px;height:33px;background:#fff;border:1px solid #a9a8a6"></div>
<div class="a" style="left:48px;top:930px;width:1246px;height:15px;background:#fff"></div>
<div class="a" style="left:51px;top:896px;font-size:13.3px;color:#222;font-family:'Liberation Sans',sans-serif">Automatic save to /tmp/DraftSight_akelly_autosave/Mold_Drawing_5667.ds$</div>
<div class="a" style="left:49px;top:929px;font-size:12px;color:#222">:</div>
<svg class="a" style="left:1280px;top:896px" width="16" height="36"><rect x="2.5" y="1.5" width="10" height="32" rx="5" fill="#f6f6f5" stroke="#b5b4b1"/><path d="M5 9l2.5-2.5 2.5 2.5" fill="#555"/><path d="M5 26l2.5 2.5 2.5-2.5" fill="#555"/><rect x="3" y="14" width="9" height="6" rx="3" fill="none" stroke="#b5b4b1"/></svg>
<div class="a" style="left:9px;top:945px;width:1321px;height:1px;background:#d8d7d4"></div>
<div class="a" style="left:9px;top:948px;width:1321px;height:1px;background:#e6e5e2"></div>
<!-- status -->
<div class="a btn" style="left:482px;top:952px;width:48px;height:22px;line-height:20px">Snap</div>
<div class="a btn" style="left:538px;top:952px;width:41px;height:22px;line-height:20px">Grid</div>
<div class="a btn" style="left:587px;top:952px;width:55px;height:22px;line-height:20px">Ortho</div>
<div class="a btn btnp" style="left:655px;top:952px;width:50px;height:22px;line-height:20px">Polar</div>
<div class="a btn btnp" style="left:713px;top:952px;width:57px;height:22px;line-height:20px">ESnap</div>
<div class="a btn" style="left:778px;top:952px;width:59px;height:22px;line-height:20px">ETrack</div>
<div class="a" style="left:845px;top:954px;font-size:15px;letter-spacing:-.35px;color:#3c3c3c">(20.2093,12.1283,.0000)</div>

<!-- canvas -->
<svg class="a" style="left:284px;top:132px" width="1010" height="714" viewBox="284 132 1010 714" shape-rendering="auto">
<defs>
 <pattern id="h" patternUnits="userSpaceOnUse" width="2.95" height="2.95" patternTransform="rotate(45)">
  <rect width="2.95" height="2.95" fill="#2a0909"/><rect x="0" y="0" width=".85" height="2.95" fill="#8a4646"/>
 </pattern>
</defs>
<rect x="284" y="132" width="1010" height="714" fill="#000"/>
<g fill="none" stroke="#f4f4f4" stroke-width="1.3">
 <!-- frame -->
 <path d="M343.5 266.5H1218.5V822.5H343.5Z"/>
 <path d="M284 471.5H308V846"/>
</g>
<!-- UCS icon -->
<g fill="none" stroke="#f0f0f0" stroke-width="1.1">
 <rect x="328.5" y="790.5" width="12" height="12"/>
 <path d="M334.5 790V712M329 724l5.5-12 5.5 12M341 796.5H418M407 791l11 5.5-11 5.5"/>
 <path d="M328.5 691l6 9 6-9M334.5 700v8"/>
 <path d="M424.5 788.5l14 17M438.5 788.5l-14 17"/>
</g>
<!-- top view -->
<g fill="none" stroke="#f0f0f0" stroke-width="1.1">
 <rect x="506.5" y="281.5" width="133" height="212"/>
</g>
<g fill="none" stroke="#7fc8e0" stroke-width="1" stroke-dasharray="6 3">
 <path d="M520.8 283V492M626.7 283V492"/>
</g>
<g fill="none" stroke="#9e2a2a" stroke-width="1.1">
 <rect x="536.5" y="332.5" width="73" height="108"/>
 <path d="M549.5 344.5V440.5M596.5 344.5V440.5M549.5 344.5H596.5M536.5 332.5l13 12M609.5 332.5l-13 12"/>
</g>
<g fill="none" stroke="#f0f0f0" stroke-width="1.05">
 <circle cx="520.8" cy="323.7" r="10.5"/><circle cx="626.7" cy="323.7" r="10.5"/><circle cx="520.8" cy="449.4" r="10.5"/><circle cx="626.7" cy="449.4" r="10.5"/>
 <circle cx="520.8" cy="323.7" r="5"/><circle cx="626.7" cy="323.7" r="5"/><circle cx="520.8" cy="449.4" r="5"/><circle cx="626.7" cy="449.4" r="5"/>
 <circle cx="572.8" cy="386.5" r="53"/><circle cx="572.8" cy="386.5" r="26.6"/><circle cx="572.8" cy="386.5" r="10.5"/><circle cx="572.8" cy="386.5" r="2.5"/>
 <circle cx="572.8" cy="343.2" r="8.5"/><circle cx="572.8" cy="343.2" r="3"/><circle cx="572.8" cy="430.8" r="8.5"/><circle cx="572.8" cy="430.8" r="3"/>
 <circle cx="528.9" cy="386.5" r="4"/><circle cx="616.8" cy="386.5" r="4"/>
</g>
<!-- front view -->
<g fill="none" stroke="#f0f0f0" stroke-width="1.1">
 <path d="M520.5 525.5V517.5H626.5V525.5"/>
 <path d="M506.5 525.5H639.5V545.5H626.5V562.5H520.5V545.5H506.5Z"/>
 <path d="M506.5 562.5H639.5V598.5H506.5Z"/>
 <path d="M506.5 598.5H639.5V635.5H506.5Z"/>
 <path d="M506.5 635.5H639.5V678.5H626.5V691.5H520.5V678.5H506.5Z"/>
 <path d="M506.5 691.5H639.5V711.5H506.5Z"/>
 <path d="M531 635.5V691M615.5 635.5V691M550 635.5V659M554.5 635.5V659M567.5 635.5V659M578.5 635.5V659M591 635.5V659M595.5 635.5V659"/>
 <path d="M532.5 659.5H613.5V685.5H532.5ZM532.5 669.5H613.5M544.5 685.5V691M561.5 685.5V691M584.5 685.5V691M601.5 685.5V691"/>
 <path d="M618.5 711V671H623.5V711M618.5 677h5"/>
 <circle cx="572.6" cy="580.5" r="5.8"/>
 <path d="M521 558v5M509 645h2M509 604v3M509 690h2M534 668h3M534 675h3" stroke-width="1.5"/>
</g>
<!-- balloons front -->
<g fill="none" stroke="#4ec04e" stroke-width="1">
 <circle cx="442.1" cy="529.2" r="6.3"/><circle cx="442.1" cy="566" r="6.3"/><circle cx="442.1" cy="602.8" r="6.3"/><circle cx="442.1" cy="632.3" r="6.3"/><circle cx="442.1" cy="720.2" r="6.3"/><circle cx="688.1" cy="720.2" r="6.3"/>
 <path d="M448.4 529.2H461.4L506.3 545.3M448.4 566H463.7L506.3 582.1M448.4 602.8H461.4L506.3 617.8M448.4 632.3H463.7L506.3 647.2M448.4 720.2H461.4L506.3 704.8M681.8 720.2H668.6L623.7 705.2"/>
</g>
<g fill="#4ec04e" font-family="Liberation Sans" font-size="8" text-anchor="middle">
 <text x="442.1" y="532.2">1</text><text x="442.1" y="569">2</text><text x="442.1" y="605.8">3</text><text x="442.1" y="635.3">4</text><text x="442.1" y="723.2">5</text><text x="688.1" y="723.2" font-size="7">11</text>
</g>
<!-- section view -->
<g stroke="none">
 <rect x="830.5" y="525.5" width="213" height="186" fill="url(#h)"/>
</g>
<g fill="#000" stroke="none">
 <path d="M884 517.5H910V531.5H884Z"/>
 <path d="M884.4 517.7H989.2V525.4H884.4Z"/>
 <rect x="863.5" y="525.5" width="21" height="14"/>
 <rect x="866.3" y="539.2" width="14.8" height="55.6"/>
 <rect x="933.2" y="523" width="7.6" height="75.6"/>
 <rect x="976.3" y="522.2" width="9.2" height="39.8"/>
 <rect x="837" y="562.6" width="27.6" height="4.7"/>
 <rect x="840.4" y="567.3" width="20.4" height="31"/>
 <rect x="840.2" y="598.5" width="20.8" height="36.4"/>
 <rect x="894.2" y="600.4" width="5.4" height="63.8"/>
 <rect x="892.6" y="664.2" width="10" height="5.2"/>
 <rect x="931.6" y="598.5" width="10.7" height="63.7"/>
 <rect x="928.6" y="662.2" width="17" height="6.5"/>
 <rect x="930.3" y="672" width="13.3" height="14.3"/>
 <rect x="923.4" y="691.2" width="26.7" height="20.1"/>
 <rect x="1019.3" y="599.7" width="14" height="62.4"/>
 <rect x="1016.1" y="662.1" width="20.4" height="6.5"/>
 <rect x="979.1" y="606.2" width="8.6" height="99"/>
 <rect x="975.2" y="705.2" width="16.1" height="5.3"/>
 <rect x="835.6" y="660.3" width="9.8" height="14.9"/>
 <rect x="833.7" y="675.2" width="14.9" height="8.5"/>
 <rect x="853.2" y="670" width="8.4" height="16.3"/>
 <rect x="865.5" y="686.3" width="178" height="4.9"/>
 <circle cx="913.7" cy="616.7" r="6.3"/><circle cx="960.1" cy="616.9" r="6.3"/>
</g>
<rect x="910.9" y="517.7" width="52.5" height="8" fill="url(#h)"/><rect x="933.2" y="523" width="7.6" height="10" fill="#000"/>
<path d="M910.9 517.7H963.4" stroke="#f4f4f4" stroke-width="1.1"/>
<g fill="#e02020" stroke="none">
 <path d="M834.3 598.5H840.2V634.9H832.5Z"/><path d="M861 598.5H866.5L868.1 634.9H861Z"/>
 <rect x="976.3" y="626.6" width="3" height="14" fill="#c04848" opacity=".8"/>
</g>
<g fill="none" stroke="#f4f4f4" stroke-width="1.1">
 <rect x="830.5" y="525.5" width="213" height="186"/>
 <path d="M830.5 562.6H863.5M884.4 539.2H910.9M950.4 562.7H1043M830.5 562.6H933"/>
 <path d="M830.5 598.5H882.5M882.5 599.8H1043"/>
 <path d="M830.5 635.4H1043M830.5 659.6H1043M830.5 669.4H1043M830.5 686.3H1043M830.5 691.2H1043"/>
 <path d="M884.4 531.5V520Q884.4 517.7 887 517.7H989.2V525.4"/>
 <path d="M910.9 517.7V542H923.5V598M950.4 598.6V542.7H963.4V517.5"/>
 <path d="M863.5 525.5V539.2H884.4V525.5ZM866.3 539.2V594.8H881.1V539.2"/>
 <path d="M933.2 523V598.6M940.8 523V598.6"/>
 <path d="M976.3 522.2V562M985.5 522.2V562M976.3 550.2H985.5" stroke="#9ee0f0"/>
 <path d="M837 562.6H864.6V567.3H837ZM840.4 567.3V598.5M860.8 567.3V598.5M840.2 622.3H861"/>
 <path d="M894.2 600.4V664.2M899.6 600.4V664.2M892.6 664.2H902.6V669.4H892.6Z"/>
 <path d="M931.6 598.5V662.2M942.3 598.5V662.2M928.6 662.2H945.6V668.7H928.6Z"/>
 <path d="M930.3 672H943.6V686.3H930.3Z" stroke="#9ee0f0"/>
 <path d="M923.4 691.2V711.3M950.1 691.2V711.3"/>
 <path d="M1019.3 599.7V662.1M1033.3 599.7V662.1M1016.1 662.1H1036.5V668.6H1016.1Z"/>
 <path d="M979.1 606.2V705.2M987.7 606.2V705.2M975.2 705.2H991.3V710.5H975.2ZM979.1 606.2H987.7M979.1 609.5H987.7"/>
 <path d="M976.3 626.6H989.8V640.6H976.3Z" stroke="#e8a0a0"/>
 <path d="M835.6 660.3H845.4V675.2H835.6ZM833.7 675.2H848.6V683.7H833.7ZM853.2 670H861.6V686.3H853.2Z"/>
 <path d="M1008.6 686.9H1024.7V690.1H1008.6Z"/>
 <circle cx="913.7" cy="616.7" r="6.3"/><circle cx="960.1" cy="616.9" r="6.3"/>
</g>
<!-- section balloons -->
<g fill="none" stroke="#4ec04e" stroke-width="1">
 <circle cx="817.2" cy="497.6" r="6.3"/><circle cx="858.2" cy="497.6" r="6.3"/><circle cx="989.4" cy="497.6" r="6.3"/><circle cx="1025.4" cy="497.6" r="6.3"/>
 <circle cx="767" cy="550.3" r="6.3"/><circle cx="767.6" cy="584.3" r="6.3"/><circle cx="767" cy="618.8" r="6.3"/><circle cx="767" cy="650" r="6.3"/><circle cx="767" cy="686.3" r="6.3"/><circle cx="767.6" cy="702.4" r="6.3"/>
 <circle cx="1108.5" cy="570.1" r="6.3"/><circle cx="1108.5" cy="608.1" r="6.3"/><circle cx="1108.5" cy="635.3" r="6.3"/><circle cx="1108.5" cy="662.8" r="6.3"/><circle cx="1108.5" cy="692.5" r="6.3"/>
 <path d="M823.5 497.6H836.7L865.5 527M864.5 497.6H878.9L904.4 522.5M983.1 497.6H969.6L945.5 525.3M1019.1 497.6H1005L982.4 525.3"/>
 <path d="M773.3 550.3H786.8L846.3 577.8M773.9 584.3H786.8L897.4 627.4M773.3 618.8H786.8L835 623.1M773.3 650H786.8L830.8 664.2M773.3 686.3H786.8L835 681.8M773.9 702.4H786.8L849.2 689.7"/>
 <path d="M1102.2 570.1L1087.2 572.1L937 617.4M1102.2 608.1L1090 609.5L988 631.6M1102.2 635.3L1090 636L1026.3 651.4M1102.2 662.8L1090 664L1044.7 677M1102.2 692.5L1090 691L988 678.4"/>
</g>
<g fill="#4ec04e" font-family="Liberation Sans" font-size="7" text-anchor="middle">
 <text x="817.2" y="500">11</text><text x="858.2" y="500">13</text><text x="989.4" y="500">14</text><text x="1025.4" y="500">15</text>
 <text x="767" y="553" font-size="8">8</text><text x="767.6" y="587">17</text><text x="767" y="621.8" font-size="8">9</text><text x="767" y="653" font-size="8">5</text><text x="767" y="689">10</text><text x="767.6" y="705">11</text>
 <text x="1108.5" y="572.6">16</text><text x="1108.5" y="610.6">10</text><text x="1108.5" y="637.8">16</text><text x="1108.5" y="665.8" font-size="8">7</text><text x="1108.5" y="695">19</text>
</g>
<!-- cursor -->
<rect x="752.5" y="663.5" width="5" height="5" fill="none" stroke="#fff" stroke-width="1"/>
<path d="M755 666v16l4-4 3 6 2-1-3-6h5z" fill="#fff" stroke="#000" stroke-width=".7"/>

<!-- BOM -->
<g fill="none" stroke="#5af05a" stroke-width="1">
<rect x="1006.5" y="266.5" width="212" height="151.3"/>
<path d="M1006.5 272.5H1218.5M1006.5 279.5H1218.5M1006.5 286.5H1218.5M1006.5 292.5H1218.5M1006.5 299.5H1218.5M1006.5 306.5H1218.5M1006.5 312.5H1218.5M1006.5 319.5H1218.5M1006.5 325.5H1218.5M1006.5 332.5H1218.5M1006.5 338.5H1218.5M1006.5 345.5H1218.5M1006.5 352.5H1218.5M1006.5 358.5H1218.5M1006.5 365.5H1218.5M1006.5 371.5H1218.5M1006.5 378.5H1218.5M1006.5 384.5H1218.5M1006.5 391.5H1218.5M1006.5 398.5H1218.5M1006.5 404.5H1218.5M1006.5 411.5H1218.5M1032.5 272.5V417.8M1059.5 272.5V417.8M1191.5 272.5V417.8"/>
</g>
<g fill="#6cff6c" font-family="Liberation Sans" font-size="5" font-weight="bold">
<text x="1112" y="271.3" text-anchor="middle" font-size="4.8">BILL OF MATERIAL</text>
<text x="1019" y="278.5" text-anchor="middle">ITEM NO</text><text x="1046" y="278.5" text-anchor="middle">QTY</text><text x="1125" y="278.5" text-anchor="middle">DESCRIPTION</text><text x="1205" y="278.5" text-anchor="middle">PART#</text>
<text x="1019" y="285.0" text-anchor="middle">1</text><text x="1046" y="285.0" text-anchor="middle">1</text><text x="1062" y="285.0" textLength="26" lengthAdjust="spacingAndGlyphs">TOP PLATE</text><text x="1205" y="285.0" text-anchor="middle">1130</text>
<text x="1019" y="291.6" text-anchor="middle">2</text><text x="1046" y="291.6" text-anchor="middle">1</text><text x="1062" y="291.6" textLength="20" lengthAdjust="spacingAndGlyphs">A-PLATE</text><text x="1205" y="291.6" text-anchor="middle">1134</text>
<text x="1019" y="298.1" text-anchor="middle">3</text><text x="1046" y="298.1" text-anchor="middle">1</text><text x="1062" y="298.1" textLength="20" lengthAdjust="spacingAndGlyphs">B-PLATE</text><text x="1205" y="298.1" text-anchor="middle">1135</text>
<text x="1019" y="304.7" text-anchor="middle">4</text><text x="1046" y="304.7" text-anchor="middle">1</text><text x="1062" y="304.7" textLength="12" lengthAdjust="spacingAndGlyphs">RAIL</text><text x="1205" y="304.7" text-anchor="middle">1139</text>
<text x="1019" y="311.3" text-anchor="middle">5</text><text x="1046" y="311.3" text-anchor="middle">1</text><text x="1062" y="311.3" textLength="35" lengthAdjust="spacingAndGlyphs">BOTTOM PLATE</text><text x="1205" y="311.3" text-anchor="middle">1136</text>
<text x="1019" y="317.9" text-anchor="middle">6</text><text x="1046" y="317.9" text-anchor="middle">1</text><text x="1062" y="317.9" textLength="64" lengthAdjust="spacingAndGlyphs">EJECTOR RETAINER PLATE</text><text x="1205" y="317.9" text-anchor="middle">1137</text>
<text x="1019" y="324.4" text-anchor="middle">7</text><text x="1046" y="324.4" text-anchor="middle">1</text><text x="1062" y="324.4" textLength="38" lengthAdjust="spacingAndGlyphs">EJECTOR PLATE</text><text x="1205" y="324.4" text-anchor="middle">1138</text>
<text x="1019" y="331.0" text-anchor="middle">8</text><text x="1046" y="331.0" text-anchor="middle">4</text><text x="1062" y="331.0" textLength="99" lengthAdjust="spacingAndGlyphs">LEADER PINS-DME CAT. #GP-24 PG. K4</text><text x="1205" y="331.0" text-anchor="middle">PUR.</text>
<text x="1019" y="337.6" text-anchor="middle">9</text><text x="1046" y="337.6" text-anchor="middle">4</text><text x="1062" y="337.6" textLength="110" lengthAdjust="spacingAndGlyphs">SHOULDER BUSHINGS-DME CAT. #GB PG. K-5</text><text x="1205" y="337.6" text-anchor="middle">PUR.</text>
<text x="1019" y="344.2" text-anchor="middle">10</text><text x="1046" y="344.2" text-anchor="middle">2</text><text x="1062" y="344.2" textLength="81" lengthAdjust="spacingAndGlyphs">3/8-16UNC x .50 LG- S.H.C.S.</text><text x="1205" y="344.2" text-anchor="middle">PUR.</text>
<text x="1019" y="350.7" text-anchor="middle">11</text><text x="1046" y="350.7" text-anchor="middle">6</text><text x="1062" y="350.7" textLength="96" lengthAdjust="spacingAndGlyphs">STOP PINS-DME CAT. #SP100 PG. K-3</text><text x="1205" y="350.7" text-anchor="middle">PUR.</text>
<text x="1019" y="357.3" text-anchor="middle">12</text><text x="1046" y="357.3" text-anchor="middle">4</text><text x="1062" y="357.3" textLength="84" lengthAdjust="spacingAndGlyphs">1/2-13UNC x 1.25 LG- S.H.C.S.</text><text x="1205" y="357.3" text-anchor="middle">PUR.</text>
<text x="1019" y="363.9" text-anchor="middle">13</text><text x="1046" y="363.9" text-anchor="middle">1</text><text x="1062" y="363.9" textLength="107" lengthAdjust="spacingAndGlyphs">LOCATING RING-DME CAT. #6501 PG. K-16</text><text x="1205" y="363.9" text-anchor="middle">PUR.</text>
<text x="1019" y="370.5" text-anchor="middle">14</text><text x="1046" y="370.5" text-anchor="middle">1</text><text x="1062" y="370.5" textLength="87" lengthAdjust="spacingAndGlyphs">SPRUE-DME CAT. #B-6601 PG. K14</text><text x="1205" y="370.5" text-anchor="middle">PUR.</text>
<text x="1019" y="377.0" text-anchor="middle">15</text><text x="1046" y="377.0" text-anchor="middle">1</text><text x="1062" y="377.0" textLength="84" lengthAdjust="spacingAndGlyphs">5/16-18UNC x 1/2 LG- F.H.C.S.</text><text x="1205" y="377.0" text-anchor="middle">PUR.</text>
<text x="1019" y="383.6" text-anchor="middle">16</text><text x="1046" y="383.6" text-anchor="middle">1</text><text x="1062" y="383.6" textLength="110" lengthAdjust="spacingAndGlyphs">SPRUE PULLER PIN-DME CAT. #EPN PG. J16</text><text x="1205" y="383.6" text-anchor="middle">PUR.</text>
<text x="1019" y="390.2" text-anchor="middle">17</text><text x="1046" y="390.2" text-anchor="middle">4</text><text x="1062" y="390.2" textLength="125" lengthAdjust="spacingAndGlyphs">EJECTOR PINS-DME CAT.#EPN1/8 PG. J-13 SEE DWG</text><text x="1205" y="390.2" text-anchor="middle">PUR.</text>
<text x="1019" y="396.8" text-anchor="middle">18</text><text x="1046" y="396.8" text-anchor="middle">2</text><text x="1062" y="396.8" textLength="93" lengthAdjust="spacingAndGlyphs">RETURN PINS-DME CAT.#RPN PG. J10</text><text x="1205" y="396.8" text-anchor="middle">PUR.</text>
<text x="1019" y="403.3" text-anchor="middle">19</text><text x="1046" y="403.3" text-anchor="middle">4</text><text x="1062" y="403.3" textLength="84" lengthAdjust="spacingAndGlyphs">3/8-16UNC x 3.50 LG- S.H.C.S.</text><text x="1205" y="403.3" text-anchor="middle">PUR.</text>
<text x="1019" y="409.9" text-anchor="middle">20</text><text x="1046" y="409.9" text-anchor="middle">1</text><text x="1062" y="409.9" textLength="125" lengthAdjust="spacingAndGlyphs">TUBULAR DOWELS-DME PG. K18 REF. 1/4 x 1/2 LG</text><text x="1205" y="409.9" text-anchor="middle">PUR.</text>
<text x="1019" y="416.5" text-anchor="middle">21</text><text x="1046" y="416.5" text-anchor="middle">2</text><text x="1062" y="416.5" textLength="113" lengthAdjust="spacingAndGlyphs">DOWELS-DME PG. K18 REF. 3/16 x 1-1/2 LG</text><text x="1205" y="416.5" text-anchor="middle">PUR.</text>
</g>
<!-- title block -->
<g fill="none" stroke="#f4f4f4" stroke-width="1.1">
<rect x="781.7" y="783.7" width="436.5" height="38.4"/>
<path d="M781.7 790H966.4M781.7 796.4H966.4M781.7 803.2H966.4M781.7 809.4H966.4M781.7 816.3H966.4M883.6 790V822M966.4 783.7V822M967.5 783.7V822"/>
<path d="M1032.5 783.7V822M1125.5 783.7V822M1032.5 796.2H1125.5M1032.5 802.7H1125.5M1032.5 810H1125.5M1032.5 816.4H1125.5M1078.8 810V822M1125.5 796.2H1218M1125.5 806.7H1218"/>
</g>
<g fill="#f4f4f4" font-family="Liberation Sans" font-size="5" font-weight="bold" lengthAdjust="spacingAndGlyphs">
<text x="826" y="789" font-size="5.2" textLength="54" lengthAdjust="spacingAndGlyphs">CROSS REFERENCES</text>
<text x="974" y="788.2" textLength="52" lengthAdjust="spacingAndGlyphs">UNLESS OTHERWISE SPEC.</text><text x="977" y="793.2" textLength="43" lengthAdjust="spacingAndGlyphs">DIMS CHANGE WITHIN</text>
<text x="974" y="799.3" textLength="22" lengthAdjust="spacingAndGlyphs">FRACTIONAL</text><text x="1012" y="799.3" textLength="14" lengthAdjust="spacingAndGlyphs">± 1/64</text>
<text x="974" y="804" textLength="20" lengthAdjust="spacingAndGlyphs">DECIMAL .XX</text><text x="1012" y="804" textLength="13" lengthAdjust="spacingAndGlyphs">± .010</text>
<text x="974" y="809" textLength="20" lengthAdjust="spacingAndGlyphs">DECIMAL .XXX</text><text x="1012" y="809" textLength="13" lengthAdjust="spacingAndGlyphs">± .005</text>
<text x="974" y="814" textLength="14" lengthAdjust="spacingAndGlyphs">ANGLES</text><text x="1012" y="814" textLength="15" lengthAdjust="spacingAndGlyphs">± 0°-30'</text>
<text x="974" y="819.4" textLength="27" lengthAdjust="spacingAndGlyphs">SURFACE FINISH</text><text x="1012" y="819.4" textLength="13" lengthAdjust="spacingAndGlyphs">/-63√</text>
<text x="1040.5" y="788.5" font-size="5.5" textLength="78.5" lengthAdjust="spacingAndGlyphs">DO NOT SCALE THIS DRAWING</text>
<text x="1036.5" y="793.5" font-size="4" textLength="86.5" lengthAdjust="spacingAndGlyphs">NOTIFY IN WRITING DISCREPANCY TO DESIGNER</text>
<text x="1075.8" y="801.9" font-size="5.5" textLength="23" lengthAdjust="spacingAndGlyphs">SEE BOM</text>
<text x="1047.6" y="815" font-size="6" textLength="11" lengthAdjust="spacingAndGlyphs">1:1</text><text x="1103" y="815" font-size="6" textLength="15" lengthAdjust="spacingAndGlyphs">A1010</text>
<text x="1042.5" y="821.4" font-size="6" textLength="23" lengthAdjust="spacingAndGlyphs">1/14/00</text>
<text x="1137" y="792" font-size="5.5" textLength="62.6" lengthAdjust="spacingAndGlyphs">5 x 8 MOLD ASSEMBLY</text>
<text x="1142.2" y="804.7" font-size="9" font-weight="normal" textLength="31.2" lengthAdjust="spacingAndGlyphs">D-1240</text>
<text x="1140" y="813.4" font-size="6.5" textLength="72" lengthAdjust="spacing">DraftSight</text>
<text x="1151.3" y="818.8" font-size="4.5" textLength="40.2" lengthAdjust="spacingAndGlyphs">Dassault Systemes</text>
</g>
<g fill="none" stroke="#f4f4f4" stroke-width="1"><rect x="1127.5" y="788.5" width="6" height="3"/><rect x="1128.5" y="800.5" width="10" height="2.5"/><path d="M1036 799h9"/><rect x="1035.5" y="804.5" width="14" height="3"/><path d="M1036 813.5h9M1083 813.5h19"/><rect x="1036.5" y="818.5" width="5" height="2.5"/><rect x="1082.5" y="818.5" width="17" height="2.5"/><path d="M1134 809h6l1 1.5-1 1.5h-6z"/></g>
<text x="1098.5" y="779" fill="#66dd66" stroke="#000" stroke-width=".5" font-family="Liberation Sans" font-size="14.5" textLength="117" lengthAdjust="spacing">bondo spreader</text>
</svg>
</body></html>
